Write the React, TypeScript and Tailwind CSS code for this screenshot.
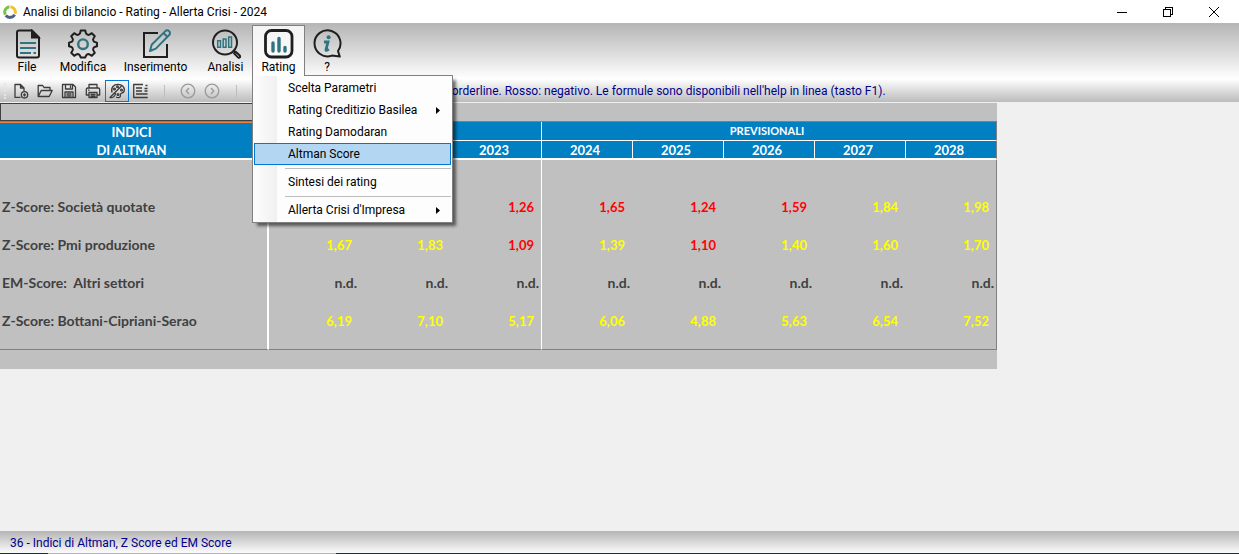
import type { ReactNode } from "react";
import clsx from "clsx";

const INK = "#1f1f1f";
const TEAL = "#2f7480";

function AppLogo() {
  return (
    <svg viewBox="0 0 14 14" className="size-3.5" fill="none" strokeWidth="3">
      <path d="M2.4 9.6A5.3 5.3 0 0 1 6.4 1.8" stroke="#7cc142" />
      <path d="M7.4 1.7A5.3 5.3 0 0 1 12 8.8" stroke="#f2c230" />
      <path d="M11.6 9.6A5.3 5.3 0 0 1 2.8 10.4" stroke="#4d5f86" />
    </svg>
  );
}

function FileIcon() {
  return (
    <svg viewBox="0 0 30 30" className="size-[30px]" fill="none" stroke={INK} strokeWidth="2">
      <path d="M7 1.5h13l7 7v18a2 2 0 0 1-2 2H7a2 2 0 0 1-2-2v-23a2 2 0 0 1 2-2z" />
      <path d="M20 2v6.500h6.500z" fill={INK} />
      <path d="M8 14h16M8 19h16M8 24h11M21.500 24H24" stroke={TEAL} />
    </svg>
  );
}

function GearIcon() {
  return (
    <svg viewBox="0 0 30 30" className="size-[30px]" fill="none" stroke={INK} strokeWidth="2" strokeLinejoin="round">
      <path d="M12.700 1.500h4.600q.5 2.700.9 3.200.8 1 2.200 1.200.9 0 3.400-1.700l3 3q-1.700 2.500-1.700 3.400.2 1.600 1.200 2.200.5.400 2.700.9v3.600q-2.200.5-2.700.9-1 .6-1.200 2.200 0 .9 1.700 3.400l-3 3q-2.500-1.700-3.400-1.700-1.400.2-2.200 1.200-.4.500-.9 2.200h-4.600q-.5-1.700-.9-2.200-.8-1-2.200-1.200-.9 0-3.400 1.700l-3-3q1.700-2.500 1.700-3.400-.2-1.600-1.200-2.200-.5-.4-2.700-.9v-3.600q2.200-.5 2.700-.9 1-.6 1.200-2.200 0-.9-1.700-3.400l3-3q2.500 1.700 3.400 1.700 1.400-.2 2.200-1.200.4-.5.9-3.200z" />
      <circle cx="15" cy="15.2" r="4.8" stroke={TEAL} strokeWidth="2.4" />
    </svg>
  );
}

function PencilIcon() {
  return (
    <svg viewBox="0 0 30 30" className="size-[30px]" fill="none" stroke={INK} strokeWidth="2">
      <path d="M17 4H3v24h23V15" />
      <path
        d="M9 22l1.7-6.3L24.3 2.1a2.6 2.6 0 0 1 3.7 0l.2.2a2.6 2.6 0 0 1 0 3.7L14.8 19.6zM22.5 4l3.8 3.8"
        stroke={TEAL}
        strokeLinejoin="round"
      />
    </svg>
  );
}

function AnalysisIcon() {
  return (
    <svg viewBox="0 0 30 30" className="size-[30px]" fill="none" stroke={INK} strokeWidth="2">
      <circle cx="14" cy="13.5" r="12" />
      <path d="M22 21.5l2 2" />
      <path d="M23.2 24.6l1.6-1.6 4 3.6a1.2 1.2 0 0 1-1.8 1.8z" />
      <path d="M6.7 11.7h2.8v6.6H6.7zM12.2 10h2.8v8.3h-2.8zM17.7 8h2.8v10.3h-2.8z" stroke={TEAL} strokeWidth="1.5" />
    </svg>
  );
}

function RatingIcon() {
  return (
    <svg viewBox="0 0 30 30" className="size-[30px]" fill="none">
      <rect x="1.5" y="1.5" width="26.5" height="26.5" rx="6" stroke={INK} strokeWidth="2.8" />
      <path d="M9 14v8M15 9.5V22M21 18.500V22" stroke={TEAL} strokeWidth="3.4" strokeLinecap="round" />
    </svg>
  );
}

function InfoIcon() {
  return (
    <svg viewBox="0 0 30 30" className="size-[30px]" fill="none">
      <path
        d="M19.8 26.6A13 13 0 1 1 26 22l1.800 5.6z"
        stroke={INK}
        strokeWidth="2"
        strokeLinejoin="round"
      />
      <circle cx="16.600" cy="8.300" r="2" fill={TEAL} />
      <path d="M12 13h4l-2 7.600c-.2 1 .6 1.300 2.800-.4" stroke={TEAL} strokeWidth="2.8" />
    </svg>
  );
}

function SmallIcon({ children, muted }: { children: ReactNode; muted?: boolean }) {
  return (
    <svg
      viewBox="0 0 16 16"
      className="size-4"
      fill="none"
      stroke={muted ? "#9a9a9a" : "#3c3c3c"}
      strokeWidth="1.3"
      strokeLinejoin="round"
    >
      {children}
    </svg>
  );
}

const menus = [
  { label: "File", icon: <FileIcon />, width: "w-[54px]" },
  { label: "Modifica", icon: <GearIcon />, width: "w-[58px]" },
  { label: "Inserimento", icon: <PencilIcon />, width: "w-[87px]" },
  { label: "Analisi", icon: <AnalysisIcon />, width: "w-[53px]" },
  { label: "Rating", icon: <RatingIcon />, width: "w-[53px]", open: true },
  { label: "?", icon: <InfoIcon />, width: "w-11" },
];

const tools = [
  {
    label: "Nuovo",
    icon: (
      <SmallIcon>
        <path d="M7.500 14.400H2V1.500h5.500L11 5v3M7.500 1.500V5H11" />
        <circle cx="11.500" cy="11.800" r="3.200" />
        <path d="M11.500 10.200v3.200M9.900 11.800h3.200" />
      </SmallIcon>
    ),
  },
  {
    label: "Apri",
    icon: (
      <SmallIcon>
        <path d="M1.200 13.500v-11h4.500L7 4.500h6v3M1.200 13.500l3-6h11l-3 6z" />
      </SmallIcon>
    ),
  },
  {
    label: "Salva",
    icon: (
      <SmallIcon>
        <path d="M1.500 1.500H12l2.500 2.500v10.500h-13zM4.500 1.500v4.500h7V1.500M9.500 2.500v2.500M4 14.500V9h8v5.500M5.500 11h5M5.500 12.800h5" />
      </SmallIcon>
    ),
  },
  {
    label: "Stampa",
    icon: (
      <SmallIcon>
        <path d="M4 5V1.500h8V5M4 12H1.300V6.500Q1.300 5 2.800 5h10.400q1.500 0 1.500 1.500V12H12M4 9.500h8v5H4zM5.500 11.300h5M5.500 13h5M3 7.200h1.500" />
      </SmallIcon>
    ),
  },
  {
    label: "Colori",
    pressed: true,
    icon: (
      <SmallIcon>
        <path d="M3 9.500C1.500 4.500 5 1.300 9 1.300c4 0 6.300 2.700 6.300 5.700 0 3-2.300 3-3.300 3.500-1.300.8.400 3-1.500 3.800-1 .4-2.500.3-3.500-.3" />
        <path d="M12.500 3L5.500 10M5.800 9.500L1 14.500c2 .5 5-.5 5.500-4z" />
        <circle cx="5.500" cy="6" r=".9" />
        <circle cx="8.500" cy="3.800" r=".9" />
        <circle cx="12.500" cy="7" r=".9" />
        <circle cx="9" cy="11.500" r=".9" />
      </SmallIcon>
    ),
  },
  {
    label: "Report",
    icon: (
      <SmallIcon>
        <path d="M10 1.500H.7v13h14M3 5h6M3 8h6M3 11h11.500M11.500 5.500h3M11.500 8h3M12.500 2.500h2" />
      </SmallIcon>
    ),
  },
];

const navigation = [
  { label: "Indietro", path: "M9 5L6.200 8 9 11" },
  { label: "Avanti", path: "M7 5l2.800 3L7 11" },
];

const ratingMenu = [
  [
    { label: "Scelta Parametri" },
    { label: "Rating Creditizio Basilea", submenu: true },
    { label: "Rating Damodaran" },
    { label: "Altman Score", active: true },
  ],
  [{ label: "Sintesi dei rating" }],
  [{ label: "Allerta Crisi d'Impresa", submenu: true }],
];

const years = ["", "", "2023", "2024", "2025", "2026", "2027", "2028"];

// r = negative, y = borderline, n = not available
const rows = [
  { label: "Z-Score: Società quotate", values: ["", "", "1,26", "1,65", "1,24", "1,59", "1,84", "1,98"], tones: "yyrrrryy" },
  { label: "Z-Score: Pmi produzione", values: ["1,67", "1,83", "1,09", "1,39", "1,10", "1,40", "1,60", "1,70"], tones: "yyryryyy" },
  { label: "EM-Score:  Altri settori", values: Array(8).fill("n.d."), tones: "nnnnnnnn" },
  { label: "Z-Score: Bottani-Cipriani-Serao", values: ["6,19", "7,10", "5,17", "6,06", "4,88", "5,63", "6,54", "7,52"], tones: "yyyyyyyy" },
];

const toneClass: Record<string, string> = {
  r: "pr-[7px] text-[#ff0000]",
  y: "pr-[7px] text-[#ffff00]",
  n: "pr-0.5 text-[14px] text-[#404040]",
};

function TitleBar() {
  return (
    <header className="flex h-[23px] shrink-0 items-center bg-white">
      <div className="flex flex-1 items-center gap-1.5 pl-[3px]">
        <AppLogo />
        <h1>Analisi di bilancio - Rating - Allerta Crisi - 2024</h1>
      </div>
      <div className="flex pr-0.5">
        <button aria-label="Riduci" className="flex w-[46px] justify-center">
          <svg viewBox="0 0 10 10" className="size-2.5" stroke="#000" shapeRendering="crispEdges">
            <path d="M0 5.500h10" />
          </svg>
        </button>
        <button aria-label="Ripristina" className="flex w-[46px] justify-center">
          <svg viewBox="0 0 10 10" className="size-2.5" fill="none" stroke="#000" shapeRendering="crispEdges">
            <path d="M.5 2.500h7v7h-7zM2.500 2.500v-2h7v7h-2" />
          </svg>
        </button>
        <button aria-label="Chiudi" className="flex w-[46px] justify-center">
          <svg viewBox="0 0 10 10" className="size-2.5" stroke="#000">
            <path d="M0 0l10 10M10 0L0 10" />
          </svg>
        </button>
      </div>
    </header>
  );
}

function RatingMenu() {
  return (
    <div
      role="menu"
      className="absolute -left-px top-[49px] z-10 w-[201px] border border-[#808080] bg-[#fdfdfd] bg-linear-to-r from-[#fdfdfd] from-0% to-[#f0f0f0] to-100% bg-size-[24px_100%] bg-no-repeat p-px shadow-[4px_4px_3px_-1px_rgba(0,0,0,0.55)]"
    >
      {/* covers the top border so that the tab and the list join */}
      <span className="absolute -top-px left-0 h-px w-[51px] bg-[#fdfdfd]" />
      {ratingMenu.map((group, index) => (
        <div key={index}>
          {index > 0 && <hr className="mb-0.5 ml-[31px] mt-[3px] border-[#bdbdbd]" />}
          {group.map((item) => (
            <button
              key={item.label}
              role="menuitem"
              className={clsx(
                "flex h-[22px] w-full items-center justify-between border pl-[33px] pr-2.5",
                item.active ? "border-[#0078d7] bg-[#b3d7f3]" : "border-transparent",
              )}
            >
              {item.label}
              {item.submenu && (
                <svg viewBox="0 0 4 7" className="h-[7px] w-1">
                  <path d="M0 0l4 3.500L0 7z" />
                </svg>
              )}
            </button>
          ))}
        </div>
      ))}
    </div>
  );
}

function MenuBar() {
  return (
    <nav className="flex h-14 shrink-0 bg-linear-to-b from-[#b5b5b5] to-white pt-0.5">
      {menus.map((menu) => (
        <div
          key={menu.label}
          className={clsx(
            "relative h-[50px]",
            menu.width,
            menu.open && "border border-b-0 border-[#808080] bg-linear-to-b from-[#f4f4f4] to-[#fdfdfd]",
          )}
        >
          <button className={clsx("flex w-full flex-col items-center", menu.open ? "pt-[3px]" : "pt-1")}>
            {menu.icon}
            <span className="leading-4">{menu.label}</span>
          </button>
          {menu.open && <RatingMenu />}
        </div>
      ))}
    </nav>
  );
}

function Divider() {
  return (
    <span className="flex w-6 justify-center">
      <span className="h-3 w-px bg-[#bdbdbd]" />
    </span>
  );
}

function Toolbar() {
  return (
    <div className="flex h-6 shrink-0 items-center border-b border-[#f0f0f0] bg-linear-to-b from-white to-[#bcbcbc]">
      <span className="mx-[3px] h-4 w-[3px] border-r-2 border-dotted border-[#e4e4e4]" />
      {tools.map((tool) => (
        <button
          key={tool.label}
          aria-label={tool.label}
          aria-pressed={tool.pressed}
          className={clsx(
            "flex h-[22px] w-6 items-center justify-center",
            tool.pressed && "border border-[#0078d7]",
          )}
        >
          {tool.icon}
        </button>
      ))}
      <div className="-ml-px flex items-center">
        <Divider />
        {navigation.map((item) => (
          <button key={item.label} aria-label={item.label} className="flex w-6 justify-center">
            <SmallIcon muted>
              <circle cx="8" cy="8" r="6.800" />
              <path d={item.path} />
            </SmallIcon>
          </button>
        ))}
        <Divider />
      </div>
      <p className="pl-[197px] text-[#00008b]">
        borderline. Rosso: negativo. Le formule sono disponibili nell'help in linea (tasto F1).
      </p>
    </div>
  );
}

function ScoreTable() {
  return (
    <div className="w-fit bg-[#c0c0c0] pb-[19px] font-['Lato','Open_Sans',sans-serif] text-[13px] leading-4">
      <div className="h-[18px] w-[268px] border border-[#404040]" />
      <table className="w-[997px] table-fixed border-separate border-spacing-0 border-t border-[#808080] font-bold">
        <colgroup>
          <col className="w-[269px]" />
        </colgroup>
        <thead className="bg-[#0080c3] text-white">
          <tr className="h-[19px]">
            <th className="border-t border-[#f08040] p-0 pr-1.5">INDICI</th>
            <th colSpan={3} className="border-b border-r border-white p-0" />
            <th colSpan={5} className="border-b border-r border-b-white border-r-[#808080] p-0 pr-1 text-[11px]">
              PREVISIONALI
            </th>
          </tr>
          <tr className="h-[19px]">
            <th className="border-b-2 border-white p-0 pr-1.5">DI ALTMAN</th>
            {years.map((year, index) => (
              <th
                key={index}
                className={clsx(
                  "border-b-2 border-r border-b-white p-0 pr-1",
                  index === 7 ? "border-r-[#808080]" : "border-r-white",
                )}
              >
                {year}
              </th>
            ))}
          </tr>
        </thead>
        <tbody>
          <tr className="h-7">
            <td className="border-r-2 border-white p-0" />
            <td colSpan={3} className="border-r border-white p-0" />
            <td colSpan={5} className="border-r border-[#808080] p-0" />
          </tr>
          {rows.map((row) => (
            <tr key={row.label} className="h-[38px]">
              <th className="whitespace-pre border-r-2 border-white p-0 pl-0.5 text-left text-[14px] text-[#404040]">
                {row.label}
              </th>
              {row.values.map((value, index) => (
                <td
                  key={index}
                  className={clsx(
                    "border-r py-0 pl-0 text-right",
                    index === 2 && "border-white",
                    index === 7 && "border-[#808080]",
                    index !== 2 && index !== 7 && "border-transparent",
                    toneClass[row.tones[index]],
                  )}
                >
                  {value}
                </td>
              ))}
            </tr>
          ))}
          <tr className="h-2.5">
            <td className="border-b border-b-[#808080] border-r-2 border-r-white p-0" />
            <td colSpan={3} className="border-b border-r border-b-[#808080] border-r-white p-0" />
            <td colSpan={5} className="border-b border-r border-[#808080] p-0" />
          </tr>
        </tbody>
      </table>
    </div>
  );
}

export default function App() {
  return (
    <div className="flex h-screen flex-col bg-[#f0f0f0] font-['Roboto','Open_Sans',sans-serif] text-[12px] leading-4 text-black">
      <TitleBar />
      <MenuBar />
      <Toolbar />
      <main className="min-h-0 flex-1 overflow-hidden">
        <ScoreTable />
      </main>
      <footer className="shrink-0 bg-linear-to-b from-[#b5b5b5] to-white">
        <p className="h-[22px] pl-2.5 pt-1 text-[#00008b]">36 - Indici di Altman, Z Score ed EM Score</p>
        <div className="flex h-px bg-[#1f2f35]">
          <span className="ml-12 w-72 bg-[#b5b5b5]" />
        </div>
      </footer>
    </div>
  );
}
